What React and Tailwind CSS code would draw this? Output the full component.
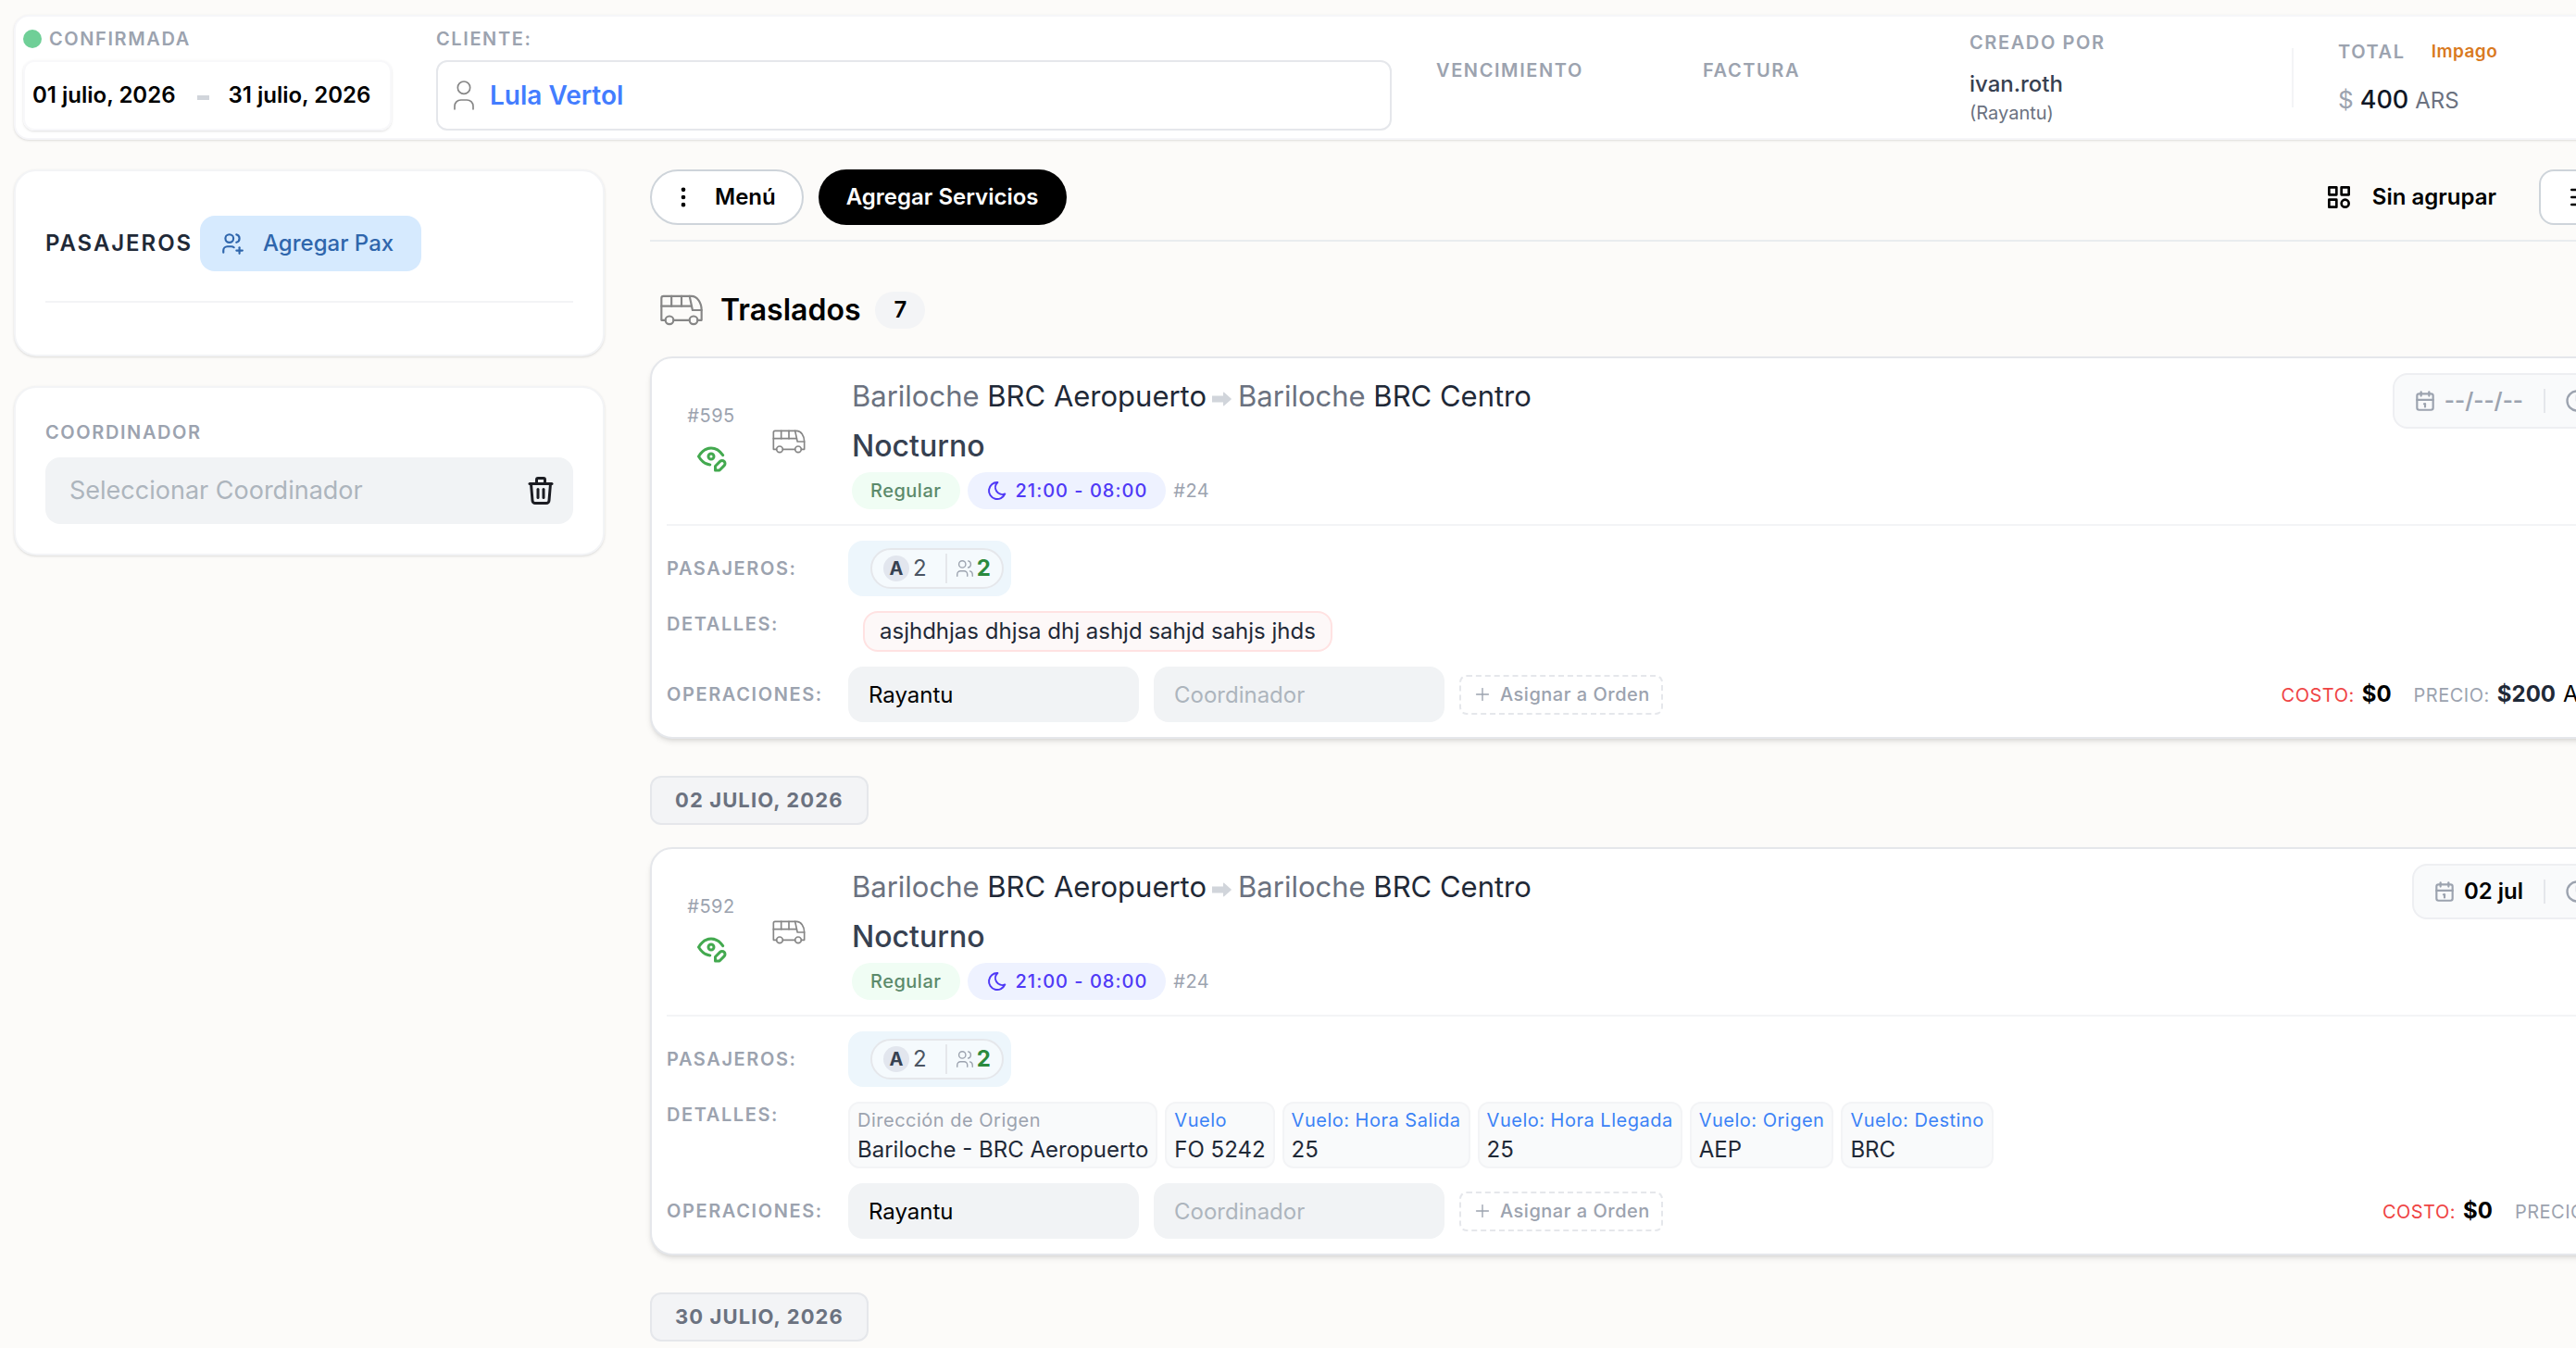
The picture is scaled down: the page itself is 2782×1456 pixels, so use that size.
import {
  TbBus,
  TbCalendar,
  TbCategory,
  TbClock,
  TbDotsVertical,
  TbEyeEdit,
  TbMenu2,
  TbMoon,
  TbPlus,
  TbTrash,
  TbUser,
  TbUsers,
  TbUsersPlus,
} from 'react-icons/tb'

const services = [
  {
    id: 595,
    date: null,
    note: 'asjhdhjas dhjsa dhj ashjd sahjd sahjs jhds',
    details: [],
    price: '$200',
    currency: 'ARS',
  },
  {
    id: 592,
    heading: '02 julio, 2026',
    date: '02 jul',
    details: [
      { label: 'Dirección de Origen', value: 'Bariloche - BRC Aeropuerto' },
      { label: 'Vuelo', value: 'FO 5242', flight: true },
      { label: 'Vuelo: Hora Salida', value: '25', flight: true },
      { label: 'Vuelo: Hora Llegada', value: '25', flight: true },
      { label: 'Vuelo: Origen', value: 'AEP', flight: true },
      { label: 'Vuelo: Destino', value: 'BRC', flight: true },
    ],
    price: '$0',
  },
]

function Label({ children, className = '', ...props }) {
  return (
    <span
      className={`text-[20px] leading-[28px] font-semibold uppercase tracking-[0.08em] text-[#9ca3af] ${className}`}
      {...props}
    >
      {children}
    </span>
  )
}

function Arrow() {
  return (
    <svg viewBox="0 0 22 16" className="mx-[6px] inline-block h-4 w-[22px] fill-[#d1d5db]" aria-hidden="true">
      <path d="M0 4.5h12V1.2c0-.6.6-.8 1-.4l7.6 6.6c.4.3.4.9 0 1.2L13 15.2c-.4.4-1 .2-1-.4v-3.3H0z" />
    </svg>
  )
}

function DateHeading({ children }) {
  return (
    <h3 className="mt-10 mb-6 flex h-[53px] w-fit items-center rounded-[12px] border-2 border-[#e5e7eb] bg-[#f3f4f6] px-[25px] text-[22px] font-bold uppercase tracking-wider text-[#6b7280]">
      {children}
    </h3>
  )
}

function TopBar() {
  return (
    <header className="flex rounded-[16px] border-2 border-[#f6f6f9] bg-white px-2 pb-2 shadow-sm">
      <div className="w-[398px] shrink-0">
        <div className="flex h-[47px] items-center gap-2">
          <span className="size-5 rounded-full bg-[#6fcf97]" />
          <Label>Confirmada</Label>
        </div>
        <div className="flex h-[76px] items-center rounded-[12px] border-2 border-[#f8f8fa] pl-2 text-[24px] font-semibold text-black shadow-sm">
          <span>01 julio, 2026</span>
          <span className="mt-1 mr-5 ml-6 h-[5px] w-[13px] bg-[#d1d5db]" />
          <span>31 julio, 2026</span>
        </div>
      </div>
      <div className="ml-12 flex-1">
        <div className="flex h-[47px] items-center">
          <Label>Cliente:</Label>
        </div>
        <div className="flex h-[76px] items-center gap-2 rounded-[12px] border-2 border-[#e5e7eb] px-2">
          <TbUser size={40} strokeWidth={1} className="text-[#868686]" />
          <a href="#cliente" className="text-[28px] font-semibold text-[#437dff]">Lula Vertol</a>
        </div>
      </div>
      <div className="ml-12 flex w-[240px] shrink-0 items-center pb-2">
        <Label>Vencimiento</Label>
      </div>
      <div className="ml-12 flex w-[240px] shrink-0 items-center pb-2">
        <Label>Factura</Label>
      </div>
      <div className="ml-12 flex w-[300px] shrink-0 flex-col pt-[14px]">
        <Label>Creado por</Label>
        <span className="mt-[14px] text-[24px] leading-[34px] font-medium text-[#374151]">ivan.roth</span>
        <span className="text-[20px] leading-[28px] text-[#6b7280]">(Rayantu)</span>
      </div>
      <div className="mt-2 ml-12 h-16 w-[2px] shrink-0 self-center bg-[#f3f4f6]" />
      <div className="ml-12 w-[360px] shrink-0 pt-6">
        <div className="flex items-center gap-7">
          <Label>Total</Label>
          <span className="text-[19px] leading-[28px] font-semibold tracking-wide text-[#d97a1f]">Impago</span>
        </div>
        <div className="mt-[18px] flex items-baseline gap-[7px] leading-[40px]">
          <span className="text-[26px] text-[#9ca3af]">$</span>
          <span className="text-[27px] font-medium text-[#111827]">400</span>
          <span className="text-[24px] text-[#6b7280]">ARS</span>
        </div>
      </div>
    </header>
  )
}

function Sidebar() {
  return (
    <aside className="flex w-[638px] shrink-0 flex-col gap-8">
      <section className="rounded-[24px] border-2 border-[#f3f4f6] bg-white px-8 pt-12 pb-14 shadow-sm">
        <div className="flex items-center gap-2 border-b-2 border-[#f3f4f6] pb-8">
          <h2 className="text-[24px] font-semibold tracking-[0.08em] text-[#1f2937]">PASAJEROS</h2>
          <button className="flex h-[60px] items-center gap-5 rounded-[16px] bg-[#d6eafe] pr-[30px] pl-[22px] text-[24px] font-medium text-[#2f66ac]">
            <TbUsersPlus size={26} />
            Agregar Pax
          </button>
        </div>
      </section>
      <section className="rounded-[24px] border-2 border-[#f3f4f6] bg-white p-8 shadow-sm">
        <label htmlFor="coordinador" className="mb-[11px] flex h-8 items-center">
          <Label>Coordinador</Label>
        </label>
        <div className="flex h-[72px] items-center rounded-[16px] bg-[#f1f3f5] pr-[17px] pl-[26px]">
          <input
            id="coordinador"
            placeholder="Seleccionar Coordinador"
            className="min-w-0 flex-1 bg-transparent text-[27px] outline-none placeholder:text-[#adb5bd]"
          />
          <button aria-label="Quitar coordinador">
            <TbTrash size={36} className="text-[#1b1c22]" />
          </button>
        </div>
      </section>
    </aside>
  )
}

function Toolbar() {
  return (
    <div className="flex items-center border-b-2 border-[#e9ecef] pb-4 text-[24px] font-semibold text-black">
      <button className="flex h-[60px] items-center gap-5 rounded-full border-2 border-[#ced4da] bg-white pr-7 pl-5">
        <TbDotsVertical size={28} />
        Menú
      </button>
      <button className="ml-4 h-[60px] rounded-full bg-black px-[30px] text-white">Agregar Servicios</button>
      <button className="ml-auto flex h-[60px] items-center gap-5 pr-[46px]">
        <TbCategory size={32} />
        Sin agrupar
      </button>
      <button aria-label="Ver lista" className="flex h-[60px] w-[153px] items-center rounded-[16px] border-2 border-[#ced4da] bg-white px-7">
        <TbMenu2 size={32} />
      </button>
    </div>
  )
}

function ServiceCard({ service }) {
  return (
    <article className="rounded-[24px] border-2 border-[#e5e7eb] bg-white p-4 shadow-md">
      <div className="flex items-start border-b-2 border-[#f3f4f6] pb-4">
        <div className="flex w-24 flex-col items-center gap-3 self-center pb-2">
          <span className="text-[20px] leading-[28px] tracking-wide text-[#9ca3af]">#{service.id}</span>
          <TbEyeEdit size={36} className="text-[#43a94f]" />
        </div>
        <div className="flex w-[72px] justify-center self-center">
          <TbBus size={40} strokeWidth={1} className="text-[#868686]" />
        </div>
        <div className="ml-8 flex-1">
          <h3 className="h-[50px] text-[31px] leading-[50px] text-[#1f2937]">
            <span className="text-[#6b7280]">Bariloche</span> BRC Aeropuerto
            <Arrow />
            <span className="text-[#6b7280]">Bariloche</span> BRC Centro
          </h3>
          <p className="h-[57px] text-[32px] leading-[57px] font-medium text-[#374151]">Nocturno</p>
          <div className="flex h-10 items-center gap-2 text-[20px]">
            <span className="flex h-10 items-center rounded-full bg-[#f0fdf4] px-5 font-medium tracking-wide text-[#5c8a6b]">
              Regular
            </span>
            <span className="flex h-10 items-center gap-2 rounded-full bg-[#eef2ff] px-5 font-medium tracking-wider text-[#4f39f6]">
              <TbMoon size={24} />
              21:00 - 08:00
            </span>
            <span className="tracking-wide text-[#9ca3af]">#24</span>
          </div>
        </div>
        <div className="flex h-[60px] items-center rounded-[16px] border-2 border-[#eeeff2] bg-[#f9fafb] px-5 text-[24px] font-semibold text-[#9ca3af]">
          <TbCalendar size={26} />
          {service.date ? (
            <span className="ml-2 text-black">{service.date}</span>
          ) : (
            <span className="ml-2">--/--/--</span>
          )}
          <span className="mr-5 ml-[22px] h-[26px] w-[2px] bg-[#e5e7eb]" />
          <TbClock size={28} />
          <span className="ml-2 w-[50px] whitespace-nowrap">--:--</span>
        </div>
      </div>

      <div className="mt-4 flex flex-col gap-4">
        <div className="flex items-center">
          <Label className="w-[196px]">Pasajeros:</Label>
          <div className="flex h-[60px] items-center rounded-[16px] bg-[#edf6fc] pr-2 pl-6">
            <div className="flex h-11 items-center rounded-full border-2 border-[#e5e7eb] bg-[#f5fafd] px-3">
              <span className="flex size-7 items-center justify-center rounded-full bg-[#e2e6ee] text-[20px] font-bold text-[#374151]">
                A
              </span>
              <span className="ml-1 text-[24px] text-[#4b5563]">2</span>
              <span className="mr-2 ml-5 h-8 w-[2px] bg-[#e5e7eb]" />
              <TbUsers size={22} strokeWidth={1.5} className="text-[#9ca3af]" />
              <span className="ml-[2px] text-[24px] font-bold text-[#2b8a3e]">2</span>
            </div>
          </div>
        </div>

        <div className="flex items-start">
          <Label className="w-[196px]">Detalles:</Label>
          {service.note && (
            <p className="ml-4 flex h-11 items-center rounded-[16px] border-2 border-[#ffe2e2] bg-[#fdf8f8] px-4 text-[24px] text-[#1f2937]">
              {service.note}
            </p>
          )}
          <div className="flex gap-2">
            {service.details.map(d => (
              <div key={d.label} className="h-[72px] rounded-[12px] border-2 border-[#f3f4f6] bg-[#f9fafb] px-2">
                <div className={`text-[20px] leading-[36px] tracking-wide ${d.flight ? 'text-[#3b82f6]' : 'text-[#9ca3af]'}`}>
                  {d.label}
                </div>
                <div className="text-[24px] leading-[28px] text-[#1f2937]">{d.value}</div>
              </div>
            ))}
          </div>
        </div>

        <div className="flex items-center">
          <Label className="w-[196px]">Operaciones:</Label>
          <input
            aria-label="Operador"
            defaultValue="Rayantu"
            className="h-[60px] w-[314px] rounded-[16px] bg-[#f1f3f5] px-[22px] text-[24px] text-black outline-none"
          />
          <input
            aria-label="Coordinador"
            placeholder="Coordinador"
            className="ml-4 h-[60px] w-[314px] rounded-[16px] bg-[#f1f3f5] px-[22px] text-[24px] outline-none placeholder:text-[#adb5bd]"
          />
          <button className="ml-4 flex h-[43px] items-center gap-2 rounded-[8px] border-2 border-dashed border-[#e5e7eb] px-3 text-[20px] font-medium tracking-wide text-[#9ca3af]">
            <TbPlus size={22} strokeWidth={1.5} />
            Asignar a Orden
          </button>
          <div className="ml-auto flex items-baseline pr-[39px] text-[24px]">
            <span className="text-[20px] tracking-wide text-[#ef4444]">COSTO:</span>
            <span className="ml-2 font-bold text-black">$0</span>
            <span className="ml-6 text-[20px] tracking-wide text-[#9ca3af]">PRECIO:</span>
            <span className="ml-2 font-bold text-[#1f2937]">{service.price}</span>
            {service.currency && <span className="ml-2 w-[70px] text-black">{service.currency}</span>}
          </div>
        </div>
      </div>
    </article>
  )
}

export default function App() {
  return (
    <div className="min-h-screen overflow-hidden bg-[#fcfbf9] font-['Inter',sans-serif]">
      {/* content is wider than the viewport and runs off its right side */}
      <div className="w-[calc(100%+128px)] px-[15px] pt-4 pb-2">
        <TopBar />
        <div className="mt-8 flex gap-[49px]">
          <Sidebar />
          <main className="min-w-0 flex-1">
            <Toolbar />
            <div className="mt-[54px] mb-[30px] flex h-10 items-center pl-2">
              <TbBus size={52} strokeWidth={1} className="text-[#868686]" />
              <h2 className="ml-4 text-[32px] font-semibold text-black">Traslados</h2>
              <span className="ml-4 flex h-10 w-[54px] items-center justify-center rounded-full bg-[#f3f4f6] text-[24px] font-semibold">
                7
              </span>
            </div>
            {services.map(s => (
              <div key={s.id}>
                {s.heading && <DateHeading>{s.heading}</DateHeading>}
                <ServiceCard service={s} />
              </div>
            ))}
            <div className="-mb-6">
              <DateHeading>30 julio, 2026</DateHeading>
            </div>
          </main>
        </div>
      </div>
    </div>
  )
}
